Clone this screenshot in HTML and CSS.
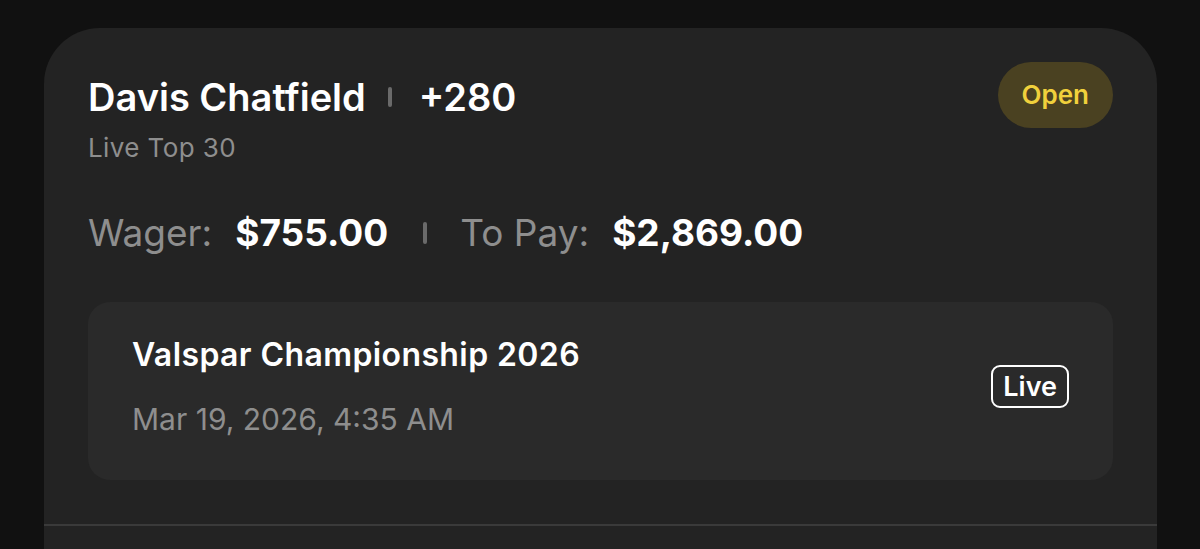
FILE: index.html
```html
<!DOCTYPE html>
<html lang="en">
<head>
    <meta charset="UTF-8">
    <meta name="viewport" content="width=device-width, initial-scale=1.0">
    <title>Bet Slip</title>
    <link rel="stylesheet" href="styles.css">
</head>
<body>
    <div class="bet-card">
        <div class="bet-head">
            <div class="bet-title">
                <div class="pick">
                    <span>Davis Chatfield</span>
                    <span class="sep"></span>
                    <span>+280</span>
                </div>
                <div class="market">Live Top 30</div>
            </div>
            <span class="status">Open</span>
        </div>

        <div class="amounts">
            <span class="label">Wager:</span>
            <span class="value">$755.00</span>
            <span class="sep big"></span>
            <span class="label">To Pay:</span>
            <span class="value">$2,869.00</span>
        </div>

        <div class="event">
            <div class="event-info">
                <div class="event-name">Valspar Championship 2026</div>
                <div class="event-date">Mar 19, 2026, 4:35 AM</div>
            </div>
            <span class="live">Live</span>
        </div>

        <div class="divider"></div>
    </div>
</body>
</html>
```

FILE: styles.css
```css
body {
    margin: 0;
    background-color: #111111;
    font-family: Inter, "Noto Sans", sans-serif;
    color: #ffffff;
    overflow: hidden;
}
.bet-card {
    margin: 28px 43px 0 44px;
    padding: 34px 44px 0;
    background-color: #232323;
    border-radius: 56px 56px 0 0;
    min-height: calc(100vh - 28px);
    box-sizing: border-box;
}
.bet-head {
    display: flex;
    justify-content: space-between;
    align-items: flex-start;
}
.pick {
    display: flex;
    align-items: center;
    margin-top: 2px;
    font-size: 38px;
    font-weight: 600;
    line-height: 66px;
}
.sep {
    display: inline-block;
    width: 4px;
    height: 20px;
    margin: 0 27px 0 22px;
    border-radius: 2px;
    background-color: #6a6a6a;
}
.market {
    margin-top: 2px;
    font-size: 26px;
    letter-spacing: 0.4px;
    color: #8e8e8e;
}
.status {
    display: inline-block;
    padding: 0 24px;
    height: 66px;
    line-height: 66px;
    border-radius: 33px;
    background-color: #4a4121;
    color: #f0d03c;
    font-size: 26px;
    font-weight: 600;
}
.amounts {
    display: flex;
    align-items: center;
    margin-top: 47px;
    line-height: 46px;
}
.amounts .label {
    margin-right: 23px;
    font-size: 37px;
    color: #8e8e8e;
}
.amounts .value {
    font-size: 37px;
    font-weight: 700;
}
.sep.big {
    margin: 0 33px 0 35px;
    height: 22px;
}
.event {
    display: flex;
    justify-content: space-between;
    align-items: center;
    margin-top: 46px;
    padding: 33px 44px 43px;
    background-color: #2a2a2a;
    border-radius: 22px;
}
.event-name {
    font-size: 32px;
    font-weight: 600;
    letter-spacing: 0.4px;
}
.event-date {
    margin-top: 27px;
    font-size: 30px;
    color: #8e8e8e;
}
.live {
    display: inline-block;
    padding: 0 10px;
    height: 39px;
    line-height: 39px;
    border: 2px solid #ffffff;
    border-radius: 9px;
    font-size: 27px;
    font-weight: 600;
}
.divider {
    height: 2px;
    margin: 44px -44px 0;
    background-color: #3a3a3a;
}
```
